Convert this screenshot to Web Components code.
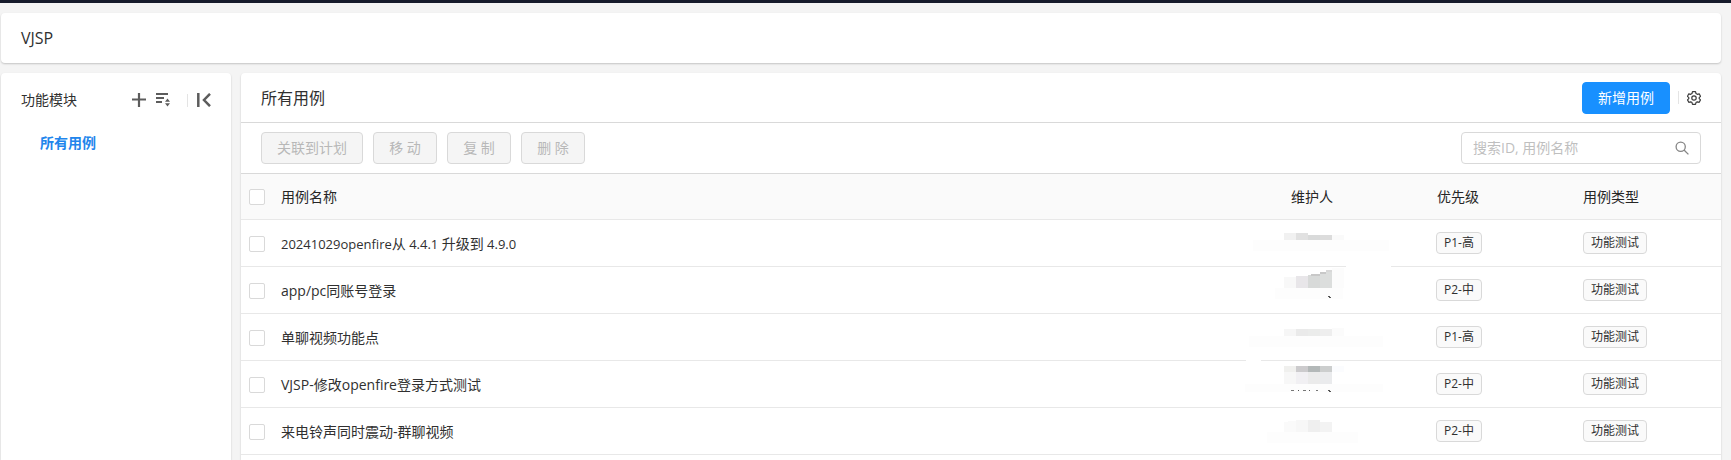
<!DOCTYPE html>
<html lang="zh-CN">
<head>
<meta charset="utf-8">
<title>VJSP</title>
<style>
html{height:100%;overflow:hidden}
body{margin:0;height:100%;background:#f4f4f4;color:#303030;font:14px/22px "Open Sans","Noto Sans CJK SC",sans-serif}
</style>
</head>
<body>
<case-app></case-app>
<script>
function define(name, html, setup) {
  const t = document.createElement('template');
  t.innerHTML = html;
  customElements.define(name, class extends HTMLElement {
    constructor() {
      super();
      this.attachShadow({ mode: 'open' }).append(t.content.cloneNode(true));
    }
    connectedCallback() { if (setup) setup(this, this.shadowRoot); }
  });
}

define('ui-card', `<style>
:host{display:block;background:#fff;border-radius:4px;box-shadow:0 1px 2px rgba(0,0,0,.2)}
</style><slot></slot>`);

define('ui-button', `<style>
:host{display:block}
button{box-sizing:border-box;height:32px;min-width:64px;padding:0 15px;border:1px solid #d9d9d9;border-radius:4px;background:#f5f5f5;color:#b8b8b8;font:inherit;white-space:nowrap;display:block}
:host([primary]) button{background:#1890ff;border-color:#1890ff;color:#fff}
</style><button type="button"><slot></slot></button>`, (host, root) => {
  root.querySelector('button').disabled = host.hasAttribute('disabled');
});

define('ui-tag', `<style>
:host{display:block;width:fit-content;box-sizing:border-box;height:22px;padding:0 7px;border:1px solid #d9d9d9;border-radius:4px;background:#fafafa;font-size:12px;line-height:20px;white-space:nowrap}
</style><slot></slot>`);

define('ui-search', `<style>
:host{display:flex;align-items:center;box-sizing:border-box;width:240px;height:32px;padding:0 11px;border:1px solid #d9d9d9;border-radius:4px;background:#fff}
input{flex:1;min-width:0;border:0;outline:0;padding:0;background:none;font:inherit;color:inherit}
input::placeholder{color:#bfbfbf;opacity:1}
svg{display:block}
</style><input type="search" aria-label="搜索ID, 用例名称" placeholder="搜索ID, 用例名称">
<svg width="14" height="14" viewBox="0 0 14 14" fill="none" stroke="#858585" stroke-width="1.3"><circle cx="5.7" cy="5.7" r="4.6"/><path d="M9 9l4.400 4.400"/></svg>`);

define('module-panel', `<style>
:host{display:block;padding:16px 20px}
header{display:flex;align-items:center;height:22px}
h2{margin:0;flex:1;font:inherit}
button{border:0;padding:0;background:none;display:block;width:14px;height:14px}
svg{display:block}
.add{margin-right:10px}
i{width:1px;height:13px;background:#e4e4e4;margin:0 9px 0 17px}
a{display:block;margin:21px 0 0 19px;color:#2185ec;font-weight:600;text-decoration:none}
</style>
<header><h2>功能模块</h2>
<button class="add" aria-label="新增"><svg width="14" height="14" fill="none" stroke="#5c5c5c" stroke-width="2.2"><path d="M0 6.500h14M7 0v14"/></svg></button>
<button aria-label="排序"><svg width="14" height="14" fill="#5c5c5c"><path d="M0 0h12v2H0zM0 4h8v2H0zM0 8h6v2H0zM11.500 5.500l2.500 3.200H9zM11.500 13.500l2.500-3.200H9z"/></svg></button>
<i></i>
<button aria-label="收起"><svg width="14" height="14" fill="none" stroke="#5c5c5c" stroke-width="2.500"><path d="M1.300 0v14M13 .800L7 7l6 6.200"/></svg></button>
</header>
<nav><a href="#all">所有用例</a></nav>`);

// Pixelated stand-ins for maintainer names: [x, y, width, height, colour]
const MASKS = [
  [[-30,20,136,11,'#fdfdfd'],[1,13,12,7,'#f1f1f1'],[13,13,12,7,'#e1e1e1'],[25,15,12,5,'#d9dada'],[37,15,12,5,'#dcdcdc'],[49,15,12,5,'#fafafa']],
  [[63,-1,45,1,'#fff'],[-8,21,68,11,'#fdfdfd'],[1,10,12,11,'#f8f8f8'],[13,9,12,12,'#e8e6e9'],[25,8,12,13,'#d8dad9'],[28,7,9,2,'#c8c8c8'],[37,5,12,16,'#dcdedd'],[37,5,6,2,'#c8c8c8'],[43,3,6,2,'#d8d8d8'],[49,1,12,20,'#fcfcfc'],[45,29,2,1,'#555'],[46,30,2,1,'#555']],
  [[-34,22,134,11,'#fdfdfd'],[1,15,12,7,'#f6f6f6'],[13,15,12,7,'#eaeaea'],[25,15,12,7,'#ebeceb'],[37,15,12,7,'#eeeeee'],[49,14,12,8,'#fbfbfb']],
  [[-37,-1,15,1,'#fff'],[-38,23,138,8,'#fdfdfd'],[1,5,12,6,'#f0f0ee'],[13,5,12,6,'#cccbcd'],[25,5,12,6,'#b3b8b8'],[37,5,12,6,'#cccece'],[49,5,12,6,'#fbfcfe'],[1,11,12,12,'#f7f7f7'],[13,11,12,12,'#f1f0f3'],[25,11,12,12,'#ebebeb'],[37,11,12,12,'#eaebed'],[8,29,3,1,'#777'],[15,29,1,1,'#555'],[20,29,3,1,'#777'],[26,29,1,1,'#555'],[33,29,2,1,'#777'],[45,29,2,1,'#555'],[46,30,2,1,'#555']],
  [[-16,24,91,11,'#fdfdfd'],[1,14,12,10,'#fafafa'],[5,13,8,2,'#fafafa'],[13,12,12,12,'#f7f7f7'],[25,12,12,12,'#efefef'],[37,14,12,10,'#f3f3f3']]
];
const ROWS = [
  ['<span class="ver">20241029openfire</span>从<span class="ver"> 4.4.1 </span>升级到<span class="ver"> 4.9.0</span>', 'P1-高'],
  ['app/pc同账号登录', 'P2-中'],
  ['单聊视频功能点', 'P1-高'],
  ['VJSP-修改openfire登录方式测试', 'P2-中'],
  ['来电铃声同时震动-群聊视频', 'P2-中']
];

define('case-table', `<style>
:host{display:block}
table{width:100%;table-layout:fixed;border-collapse:separate;border-spacing:0}
th,td{box-sizing:border-box;height:47px;padding:0 8px;border-bottom:1px solid #e8e8e8;text-align:left;font-weight:400;white-space:nowrap}
th{height:46px;background:#fafafa;color:#262626}
.check{width:32px}
.meta{width:146px}
td.name{padding-top:2px}
td.tag{padding:0 7px 1px}
td.mask{padding:0}
svg{display:block;overflow:visible}
.ver{font-size:13px;white-space:pre}
input{appearance:none;box-sizing:border-box;width:16px;height:16px;margin:0;border:1px solid #d9d9d9;border-radius:2px;background:#fff;display:block}
</style>
<table><thead><tr><th class="check"><input type="checkbox" aria-label="全选"></th><th>用例名称</th><th class="meta">维护人</th><th class="meta">优先级</th><th class="meta">用例类型</th></tr></thead><tbody></tbody></table>`, (host, root) => {
  root.querySelector('tbody').innerHTML = ROWS.map(([name, level], i) => `<tr>
<td class="name"><input type="checkbox" id="c${i}"></td><td class="name"><label for="c${i}">${name}</label></td>
<td class="mask"><svg width="146" height="46" shape-rendering="crispEdges">${MASKS[i].map(([x, y, w, h, c]) => `<rect x="${x}" y="${y}" width="${w}" height="${h}" fill="${c}"/>`).join('')}</svg></td>
<td class="tag"><ui-tag>${level}</ui-tag></td><td><ui-tag>功能测试</ui-tag></td></tr>`).join('');
});

define('case-panel', `<style>
:host{display:block}
header,.tools{display:flex;align-items:center;box-sizing:border-box;padding:0 20px;border-bottom:1px solid #d9d9d9}
header{height:50px}
.tools{height:51px;gap:10px;white-space:nowrap}
h1{margin:0;flex:1;font:inherit;font-size:16px}
i{width:1px;height:13px;background:#e4e4e4;margin:0 14px 0 8px}
i{margin-right:14px}
.gear{border:0;padding:0;background:none;display:block}
i{margin-right:8px}
svg{display:block}
ui-search{margin-left:auto}
</style>
<header><h1>所有用例</h1><ui-button primary>新增用例</ui-button><i></i>
<button class="gear" aria-label="设置"><svg width="14" height="14" viewBox="0 0 14 14" fill="none" stroke="#3c3c3c" stroke-width="1.200" stroke-linejoin="round"><path d="M5.500.700h3l.5 1.800 1.300.8 1.900-.5 1.300 2.500-1.300 1.300v1l1.300 1.300-1.300 2.400-1.900-.5-1.300.8-.5 1.700h-3l-.5-1.700-1.300-.8-1.900.5L.500 8.900l1.300-1.300v-1L.500 5.300l1.300-2.500 1.900.5L5 2.500z"/><circle cx="7" cy="7" r="2.200"/></svg></button></header>
<div class="tools"><ui-button disabled>关联到计划</ui-button><ui-button disabled>移 动</ui-button><ui-button disabled>复 制</ui-button><ui-button disabled>删 除</ui-button><ui-search></ui-search></div>
<case-table></case-table>`);

define('case-app', `<style>
:host{display:flex;flex-direction:column;gap:10px;min-height:100%;box-sizing:border-box;border-top:3px solid #161b2b;padding:10px 10px 0 1px}
.title{padding:14px 20px;font-size:16px}
main{flex:1;display:grid;grid-template-columns:230px minmax(0,1fr);gap:10px}
main ui-card{border-radius:4px 4px 0 0}
</style>
<ui-card class="title">VJSP</ui-card>
<main><ui-card><module-panel></module-panel></ui-card><ui-card><case-panel></case-panel></ui-card></main>`);
</script>
</body>
</html>
